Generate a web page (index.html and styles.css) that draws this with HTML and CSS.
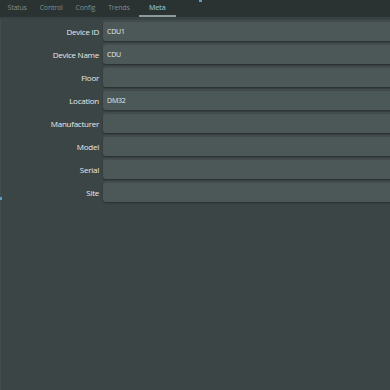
FILE: index.html
```html
<!DOCTYPE html>
<html lang="en">
<head>
  <meta charset="UTF-8" />
  <title>Device Meta</title>
  <link rel="stylesheet" href="styles.css">
</head>
<body>
  <div class="app">
    <!-- Tabs -->
    <nav class="tabs">
      <span class="tab">Status</span>
      <span class="tab">Control</span>
      <span class="tab">Config</span>
      <span class="tab">Trends</span>
      <span class="tab active">Meta</span>
      <span class="tab-dot"></span>
    </nav>

    <!-- Meta form -->
    <section class="meta">
      <span class="edge-mark"></span>
      <div class="row"><label>Device ID</label><div class="field">CDU1</div></div>
      <div class="row"><label>Device Name</label><div class="field">CDU</div></div>
      <div class="row"><label>Floor</label><div class="field"></div></div>
      <div class="row"><label>Location</label><div class="field">DM32</div></div>
      <div class="row"><label>Manufacturer</label><div class="field"></div></div>
      <div class="row"><label>Model</label><div class="field"></div></div>
      <div class="row"><label>Serial</label><div class="field"></div></div>
      <div class="row"><label>Site</label><div class="field"></div></div>
    </section>
  </div>
</body>
</html>
```

FILE: styles.css
```css
html, body {
  margin: 0;
  padding: 0;
  height: 100%;
  background: #3c4546;
  font-family: "Open Sans", "Noto Sans", sans-serif;
  overflow: hidden;
}

.app {
  display: flex;
  flex-direction: column;
  height: 100%;
}

.tabs {
  position: relative;
  display: flex;
  height: 17px;
  padding-left: 1px;
  background: #2b3332;
  border-bottom: 2px solid #394242;
}

.tab {
  padding: 0 6.5px;
  font-size: 7px;
  letter-spacing: -0.2px;
  line-height: 16px;
  color: #7f8b8a;
}

.tab.active {
  margin-left: 3px;
  padding: 0 10px;
  color: #7fb3c2;
  font-weight: 600;
  box-shadow: inset 0 -2px 0 #8b9a9a;
}

.tab-dot {
  position: absolute;
  left: 199px;
  top: 0;
  width: 3px;
  height: 2px;
  background: #5b9fc0;
}

.meta {
  position: relative;
  flex: 1;
  display: flex;
  flex-direction: column;
  gap: 4px;
  padding-top: 3px;
  border-left: 1px solid #434d4d;
}

.edge-mark {
  position: absolute;
  left: -1px;
  top: 178px;
  width: 2px;
  height: 3px;
  background: #5b9fc0;
}

.row {
  display: flex;
  align-items: center;
  gap: 4px;
}

.row label {
  width: 98px;
  text-align: right;
  font-size: 8px;
  letter-spacing: -0.25px;
  color: #e6eaea;
}

.field {
  flex: 1;
  height: 19px;
  margin-right: -6px;
  padding-left: 4px;
  border-radius: 3px;
  background: #4c5757;
  box-shadow: 0 -2px 0 #434c4c, 0 1px 2px rgba(0, 0, 0, 0.35);
  font-size: 7px;
  letter-spacing: -0.2px;
  line-height: 19px;
  color: #e6eaea;
}
```
